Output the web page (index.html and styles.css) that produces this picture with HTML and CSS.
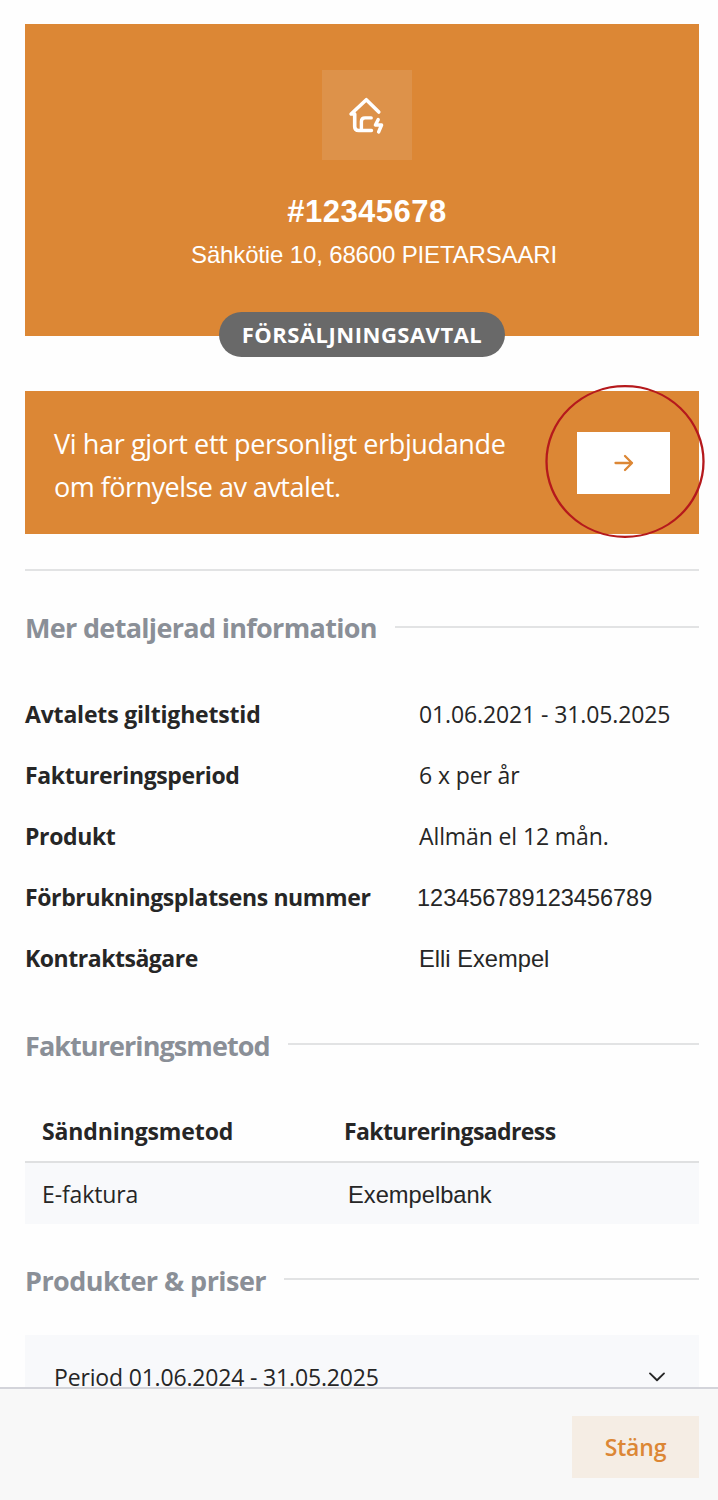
FILE: index.html
```html
<!DOCTYPE html>
<html lang="sv">
<head>
    <meta charset="UTF-8">
    <meta name="viewport" content="width=device-width, initial-scale=1.0">
    <title>Försäljningsavtal</title>
    <link rel="stylesheet" href="styles.css">
</head>
<body>
    <main class="contract">
        <header class="hero">
            <div class="hero-icon">
                <svg width="38" height="40" viewBox="0 0 38 40" fill="none" stroke="#fff" stroke-width="3.6" stroke-linecap="round" stroke-linejoin="round">
                    <path d="M30.8 16 L18.3 3.7 L3.1 18 H6.7 V30.5 Q6.7 34.5 10.7 34.5 H23.4"/>
                    <path d="M13.4 34 V25.6 Q13.4 21.9 17.1 21.9 H23.2" stroke-width="3.4"/>
                    <path d="M30.2 23.6 L27.4 29 H33.6 L30.6 36" stroke-width="3.4"/>
                </svg>
            </div>
            <h1 class="hero-title">#12345678</h1>
            <p class="hero-address">Sähkötie 10, 68600 PIETARSAARI</p>
            <span class="badge">FÖRSÄLJNINGSAVTAL</span>
        </header>

        <section class="offer">
            <p class="offer-text">Vi har gjort ett personligt erbjudande<br><span class="offer-end">om förnyelse av avtalet.</span></p>
            <button class="offer-button" aria-label="Visa erbjudande">
                <svg width="20" height="18" viewBox="0 0 20 18" fill="none" stroke="#dc8735" stroke-width="2.3" stroke-linecap="round" stroke-linejoin="round">
                    <path d="M1.5 9 H18 M11 2 L18 9 L11 16"/>
                </svg>
            </button>
            <svg class="offer-ring" width="160" height="154" viewBox="0 0 160 154" fill="none" stroke="#b5191c" stroke-width="2.3">
                <ellipse cx="80" cy="76.5" rx="78.5" ry="75.3"/>
            </svg>
        </section>

        <hr class="divider">

        <h2 class="section-title">Mer detaljerad information</h2>
        <dl class="details">
            <dt class="validity">Avtalets giltighetstid</dt>
            <dd>01.06.2021 - 31.05.2025</dd>
            <dt>Faktureringsperiod</dt>
            <dd>6 x per år</dd>
            <dt>Produkt</dt>
            <dd>Allmän el 12 mån.</dd>
            <dt>Förbrukningsplatsens nummer</dt>
            <dd class="plain number">123456789123456789</dd>
            <dt class="owner">Kontraktsägare</dt>
            <dd class="plain">Elli Exempel</dd>
        </dl>

        <h2 class="section-title method">Faktureringsmetod</h2>
        <table class="billing">
            <thead>
                <tr><th>Sändningsmetod</th><th class="address">Faktureringsadress</th></tr>
            </thead>
            <tbody>
                <tr><td>E-faktura</td><td class="plain bank">Exempelbank</td></tr>
            </tbody>
        </table>

        <h2 class="section-title prices">Produkter &amp; priser</h2>
        <div class="period">
            <span>Period 01.06.2024 - 31.05.2025</span>
            <svg width="18" height="12" viewBox="0 0 18 12" fill="none" stroke="#262626" stroke-width="1.9" stroke-linecap="round" stroke-linejoin="round">
                <path d="M2 2.4 L9 9.2 L16 2.4"/>
            </svg>
        </div>
    </main>

    <footer class="footer">
        <button class="close-button">Stäng</button>
    </footer>
</body>
</html>
```
FILE: styles.css
```css
* {
    box-sizing: border-box;
}
body {
    margin: 0;
    height: 1500px;
    overflow: hidden;
    display: flex;
    flex-direction: column;
    background: #fefefe;
    color: #262626;
    font-family: "Open Sans", "Noto Sans", sans-serif;
    font-size: 23px;
}
h1, h2, p, dl, dd {
    margin: 0;
}
svg {
    display: block;
}
button {
    border: none;
    padding: 0;
    font-family: inherit;
}
.contract {
    flex: 1;
    min-height: 0;
    overflow: hidden;
    padding: 24px 19px 0 25px;
}
.plain {
    padding-top: 2px;
    font-family: "Liberation Sans", Arial, sans-serif;
    font-size: 23.7px;
    letter-spacing: 0;
}

/* Header card */
.hero {
    position: relative;
    height: 312px;
    padding-top: 46px;
    display: flex;
    flex-direction: column;
    align-items: center;
    background: #dc8735;
    color: #fff;
    font-family: "Liberation Sans", Arial, sans-serif;
}
.hero-icon {
    width: 90px;
    height: 90px;
    margin-left: 9px;
    padding: 1px 0 0 1px;
    display: flex;
    align-items: center;
    justify-content: center;
    background: #dd924a;
}
.hero-title {
    margin-top: 34px;
    padding-left: 10px;
    font-size: 31px;
    line-height: 36px;
    letter-spacing: 0.5px;
}
.hero-address {
    margin-top: 11px;
    padding-left: 24px;
    font-size: 24px;
    line-height: 28px;
    letter-spacing: -0.15px;
    white-space: nowrap;
}
.badge {
    position: absolute;
    left: 194px;
    bottom: -21px;
    width: 286px;
    height: 45px;
    border-radius: 23px;
    background: #696969;
    font: bold 22px/45px "Open Sans", sans-serif;
    letter-spacing: 0.5px;
    text-align: center;
    white-space: nowrap;
}

/* Renewal offer */
.offer {
    position: relative;
    height: 143px;
    margin-top: 55px;
    padding: 0 29px;
    display: flex;
    align-items: center;
    justify-content: space-between;
    background: #dc8735;
    color: #fff;
}
.offer-text {
    padding-top: 4px;
    font-size: 27px;
    line-height: 43px;
    letter-spacing: -0.37px;
    white-space: nowrap;
}
.offer-end {
    letter-spacing: -0.52px;
}
.offer-button {
    width: 93px;
    height: 62px;
    display: flex;
    align-items: center;
    justify-content: center;
    background: #fff;
}
.offer-ring {
    position: absolute;
    left: 520px;
    top: -6px;
}
.divider {
    height: 2px;
    margin: 35px 0 0;
    border: none;
    background: #e2e3e4;
}

/* Sections */
.section-title {
    display: flex;
    align-items: center;
    gap: 18px;
    height: 40px;
    color: #8a8f97;
    font-size: 27px;
    line-height: 40px;
    letter-spacing: -0.68px;
    white-space: nowrap;
}
.section-title::after {
    content: "";
    flex: 1;
    height: 2px;
    margin-bottom: 3px;
    background: #e2e3e4;
}
.section-title.method {
    letter-spacing: -0.93px;
}
.section-title.prices {
    letter-spacing: -0.55px;
}
.divider + .section-title {
    margin-top: 37px;
}
.details {
    display: grid;
    grid-template-columns: 394px 1fr;
    grid-auto-rows: 61.2px;
    align-items: center;
    margin: 35px 0 37px;
    letter-spacing: -0.11px;
    white-space: nowrap;
}
.details dt {
    font-weight: bold;
    letter-spacing: -0.38px;
}
.details .validity {
    letter-spacing: -0.18px;
}
.details .owner {
    letter-spacing: -0.47px;
}
.details .number {
    margin-left: -2px;
    font-size: 23.5px;
}
.billing {
    width: 100%;
    height: 123px;
    margin: 35px 0 37px;
    border-collapse: collapse;
    table-layout: fixed;
    text-align: left;
    letter-spacing: -0.12px;
}
.billing th,
.billing td {
    height: 61px;
    padding: 0 17px;
}
.billing td {
    height: 62px;
    padding-top: 1px;
}
.billing th:first-child {
    width: 302px;
}
.billing .address {
    letter-spacing: -0.6px;
}
.billing thead tr {
    border-bottom: 2px solid #dfe0e1;
}
.billing tbody tr {
    background: #f8f9fb;
}
.billing .bank {
    padding: 4px 0 0 21px;
}
.period {
    display: flex;
    align-items: center;
    justify-content: space-between;
    height: 84px;
    margin-top: 34px;
    padding: 0 33px 0 29px;
    background: #f8f9fb;
    letter-spacing: -0.17px;
}

/* Bottom bar */
.footer {
    flex: none;
    height: 113px;
    padding: 27px 19px 0;
    display: flex;
    justify-content: flex-end;
    align-items: flex-start;
    border-top: 2px solid #d3d4da;
    background: #f8f8f8;
}
.close-button {
    width: 127px;
    height: 62px;
    background: #f5ede4;
    color: #dc8735;
    font-size: 23px;
    font-weight: 600;
    letter-spacing: -0.2px;
}
```
